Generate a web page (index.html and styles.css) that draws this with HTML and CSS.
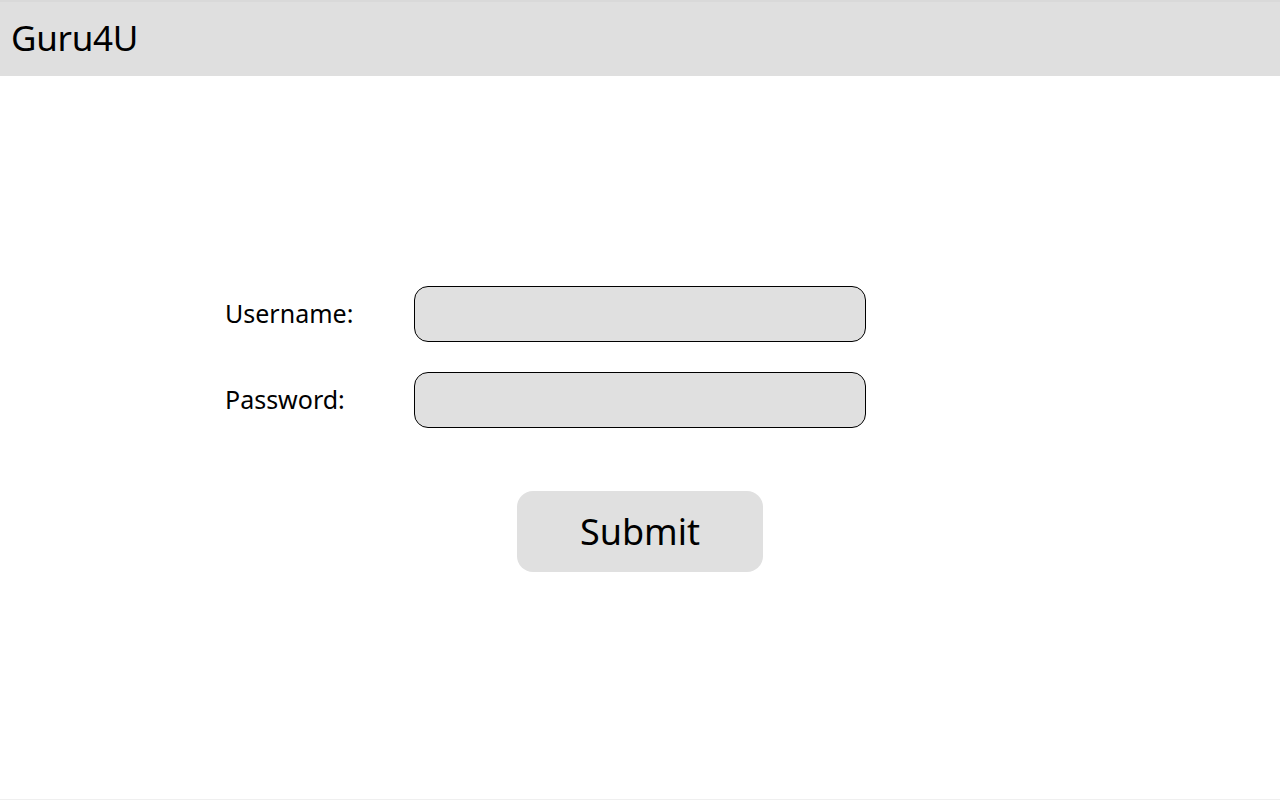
FILE: index.html
```html
<!DOCTYPE html>
<html lang="en">
<head>
<meta charset="utf-8">
<title>Guru4U</title>
<link rel="stylesheet" href="styles.css">
</head>
<body>
<div class="page">
  <header class="topbar">
    <span class="brand">Guru4U</span>
  </header>
  <main class="content">
    <form class="login">
      <div class="row">
        <label class="label" for="u">Username:</label>
        <input class="field" id="u" type="text">
      </div>
      <div class="row">
        <label class="label" for="p">Password:</label>
        <input class="field" id="p" type="password">
      </div>
      <div class="actions">
        <button class="submit" type="button">Submit</button>
      </div>
    </form>
  </main>
</div>
</body>
</html>
```

FILE: styles.css
```css
html, body {
  margin: 0;
  padding: 0;
  background: #ffffff;
}
body {
  font-family: "Noto Sans", "Open Sans", sans-serif;
  color: #000;
}
.page {
  width: 1280px;
  height: 800px;
  box-sizing: border-box;
  border-bottom: 1px solid #efefef;
  display: flex;
  flex-direction: column;
}
.topbar {
  height: 76px;
  background: #dfdfdf;
  display: flex;
  align-items: center;
  padding-left: 11px;
  box-sizing: border-box;
  border-top: 2px solid #d9d9d9;
}
.brand {
  font-size: 35px;
  line-height: 1;
  margin-top: -3px;
  letter-spacing: -0.3px;
}
.content {
  flex: 1;
  padding-top: 210px;
  padding-left: 225px;
}
.login {
  display: flex;
  flex-direction: column;
  width: 641px;
}
.row {
  display: flex;
  align-items: center;
  margin-bottom: 30px;
}
.label {
  width: 189px;
  font-size: 25px;
  margin-top: -2px;
}
.field {
  width: 452px;
  height: 56px;
  box-sizing: border-box;
  border: 1px solid #000;
  border-radius: 14px;
  background: #e0e0e0;
  padding: 0 12px;
  font: inherit;
  outline: none;
}
.actions {
  padding-left: 292px;
  padding-top: 33px;
}
.submit {
  width: 246px;
  height: 81px;
  border: none;
  border-radius: 16px;
  background: #e0e0e0;
  font-family: inherit;
  font-size: 36px;
  color: #000;
  padding: 0;
}
```
